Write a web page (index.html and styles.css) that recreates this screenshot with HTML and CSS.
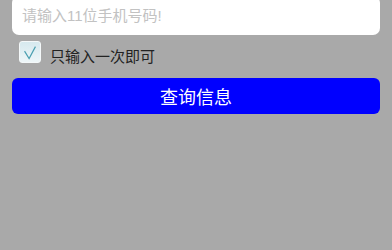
FILE: index.html
```html
<!doctype html>
<html>
<head>
    <meta charset="UTF-8">
    <title>查询</title>
    <link rel="stylesheet" href="styles.css">
</head>
<body>
<div class="form">
    <input class="phone" type="text" placeholder="请输入11位手机号码!">
    <label class="remember">
        <span class="box">
            <svg width="22" height="22" viewBox="0 0 22 22">
                <path d="M5 9 L10 17 L17 4" fill="none" stroke="#4a9fb0" stroke-width="1.3"/>
            </svg>
        </span>
        <span class="remember-text">只输入一次即可</span>
    </label>
    <button class="submit">查询信息</button>
</div>
</body>
</html>
```

FILE: styles.css
```css
html,
body {
    margin: 0;
    height: 100%;
}

body {
    background: #a9a9a9;
    font-family: "Liberation Sans", "Noto Sans CJK SC", sans-serif;
}

.form {
    padding: 0 12px;
    display: flex;
    flex-direction: column;
}

.phone {
    margin-top: -4px;
    height: 39px;
    box-sizing: border-box;
    border: none;
    border-radius: 7px;
    background: #fff;
    padding: 0 10px;
    font-size: 15px;
    font-family: inherit;
    outline: none;
}

.phone::placeholder {
    color: #c2c2c2;
}

.remember {
    display: flex;
    align-items: flex-start;
    margin: 6px 0 0 7px;
    height: 22px;
}

.box {
    width: 22px;
    height: 22px;
    box-sizing: border-box;
    border: 1px solid #f4f8f9;
    border-radius: 3px;
    background: linear-gradient(#d6e9ee, #eef6f8);
    display: flex;
}

.remember-text {
    margin: 4px 0 0 9px;
    font-size: 15px;
    color: #222;
}

.submit {
    margin-top: 15px;
    height: 36px;
    border: none;
    border-radius: 6px;
    background: #0000ff;
    color: #fff;
    font-size: 18px;
    font-family: inherit;
}
```
